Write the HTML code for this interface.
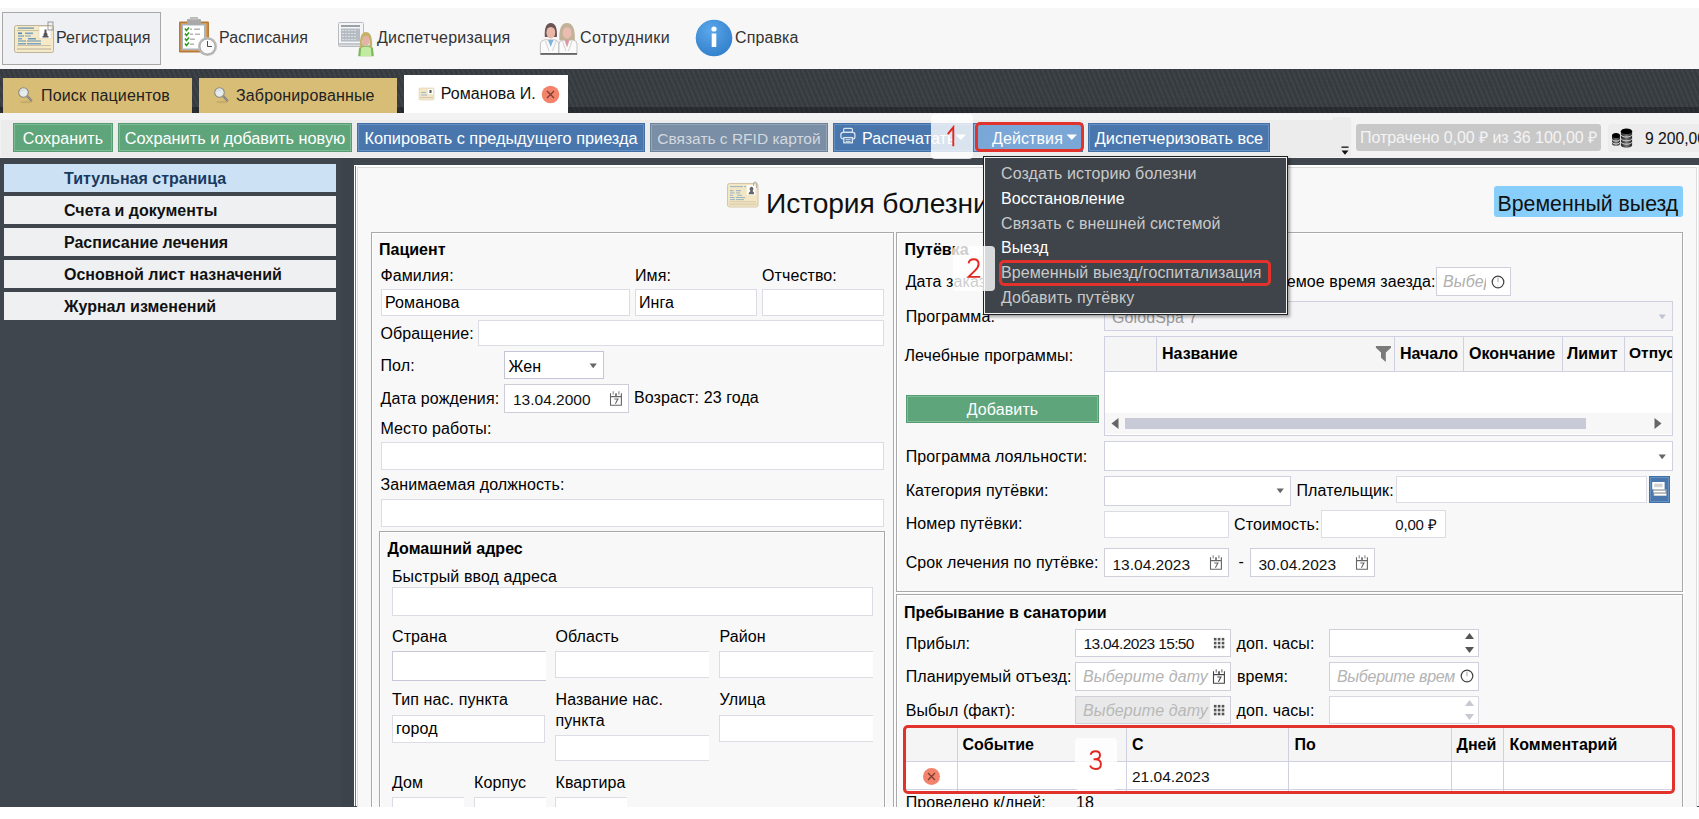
<!DOCTYPE html>
<html><head><meta charset="utf-8"><style>
html,body{margin:0;padding:0;}
body{width:1699px;height:819px;overflow:hidden;position:relative;background:#fff;font-family:"Liberation Sans", sans-serif;}
body>div,body>svg{position:absolute;box-sizing:content-box;}
.t{position:absolute;white-space:nowrap;}
</style></head><body>
<div style="left:0px;top:0px;width:1699px;height:8px;background:#fff"></div>
<div style="left:0px;top:8px;width:1699px;height:61px;background:#f7f7f7"></div>
<div style="left:2px;top:12px;width:157px;height:51px;background:#eef0f3;border:1px solid #a8a8a8"></div>
<svg style="position:absolute;left:13px;top:21px;" width="44" height="36" viewBox="0 0 44 36">
<rect x="1.5" y="4.5" width="39" height="27" rx="2" fill="#f6e9c6" stroke="#bdb39a"/>
<rect x="4" y="27" width="34" height="2" fill="#d6cbb0"/>
<rect x="4" y="24" width="34" height="1" fill="#c8bfa6"/>
<rect x="4" y="9" width="28" height="1" fill="#cabf9f"/>
<rect x="5" y="6.5" width="16" height="1.2" fill="#5b8fb0"/>
<rect x="5" y="11.5" width="4" height="1.6" fill="#4f86ad"/><rect x="12" y="11.5" width="8" height="1.6" fill="#7aa4c2"/>
<rect x="5" y="14.5" width="6" height="1" fill="#5b8fb0"/><rect x="12" y="14.5" width="6" height="1" fill="#7aa4c2"/>
<rect x="5" y="17" width="4" height="1.5" fill="#7aa4c2"/><rect x="15" y="17" width="8" height="1.5" fill="#6a9ab9"/>
<rect x="5" y="19.5" width="8" height="1" fill="#5b8fb0"/><rect x="14" y="19.5" width="14" height="1" fill="#5b8fb0"/>
<rect x="5" y="22" width="8" height="1.5" fill="#7aa4c2"/><rect x="14" y="22" width="14" height="1.5" fill="#7aa4c2"/>
<rect x="26" y="5.5" width="12" height="12" fill="#fff" stroke="#d8d0bb" stroke-width="0.5"/>
<path d="M29.5 16.5 h6 v-1.5 h-1 v-2 l-1-1.5 v-3 h-2 v3 l-1 1.5 v2 h-1z" fill="#555"/>
<rect x="35" y="1" width="5" height="8" fill="none" stroke="#999" stroke-width="1"/>
</svg>
<div class="t" style="left:56px;top:30.46px;font-size:16px;line-height:16px;font-weight:400;color:#333;letter-spacing:0.1px;">Регистрация</div>
<svg style="position:absolute;left:176px;top:16px;" width="44" height="42" viewBox="0 0 44 42">
<rect x="3" y="5.5" width="30" height="31" rx="1" fill="#b47a3c"/>
<rect x="4.5" y="7" width="27" height="28" fill="#d59a55"/>
<rect x="6" y="8" width="24" height="26" fill="#aab4be"/>
<rect x="7" y="9.5" width="21" height="23" fill="#fff"/>
<rect x="11" y="3" width="14" height="6" rx="1" fill="#a9a9a9"/>
<rect x="14" y="1" width="8" height="3" fill="#bdbdbd"/>
<g stroke="#2e9a18" stroke-width="1.6" fill="none"><path d="M9 12.5 l1.5 2 2.5-3"/><path d="M9 17.5 l1.5 2 2.5-3"/><path d="M9 22.5 l1.5 2 2.5-3"/><path d="M9 27.5 l1.5 2 2.5-3"/></g>
<g fill="#b5b5b5"><rect x="14" y="12.5" width="2" height="1.5"/><rect x="18" y="12.5" width="6" height="1.5"/><rect x="14" y="17.5" width="3" height="1.5"/><rect x="19" y="17.5" width="5" height="1.5"/><rect x="14" y="22.5" width="5" height="1.5"/><rect x="14" y="27.5" width="4" height="1.5"/></g>
<circle cx="31.5" cy="30.5" r="9.5" fill="#bbb"/>
<circle cx="31.5" cy="30.5" r="7.5" fill="#fafafa" stroke="#999" stroke-width="0.8"/>
<path d="M31.5 25 v5.5 h4.5" stroke="#222" stroke-width="0.8" fill="none"/>
</svg>
<div class="t" style="left:219px;top:30.46px;font-size:16px;line-height:16px;font-weight:400;color:#333;letter-spacing:0.1px;">Расписания</div>
<svg style="position:absolute;left:336px;top:20px;" width="42" height="40" viewBox="0 0 42 40">
<rect x="2.5" y="2.5" width="25" height="24" rx="1" fill="#f3f5f7" stroke="#b8bcc0"/>
<rect x="5" y="5" width="19" height="2" fill="#9aa0a6"/>
<rect x="5" y="8.5" width="19" height="13" fill="#b5bcc3"/>
<g fill="#fff"><rect x="6.5" y="10" width="1" height="1"/><rect x="9.5" y="10" width="1" height="1"/><rect x="12.5" y="10" width="1" height="1"/><rect x="15.5" y="10" width="1" height="1"/><rect x="18.5" y="10" width="1" height="1"/>
<rect x="6.5" y="13" width="1" height="1"/><rect x="9.5" y="13" width="1" height="1"/><rect x="12.5" y="13" width="1" height="1"/><rect x="15.5" y="13" width="1" height="1"/><rect x="18.5" y="13" width="1" height="1"/>
<rect x="6.5" y="16" width="1" height="1"/><rect x="9.5" y="16" width="1" height="1"/><rect x="12.5" y="16" width="1" height="1"/><rect x="15.5" y="16" width="1" height="1"/><rect x="18.5" y="16" width="1" height="1"/>
<rect x="6.5" y="19" width="1" height="1"/><rect x="9.5" y="19" width="1" height="1"/><rect x="12.5" y="19" width="1" height="1"/><rect x="15.5" y="19" width="1" height="1"/><rect x="18.5" y="19" width="1" height="1"/></g>
<rect x="3" y="23" width="24" height="2.5" fill="#c5c9cd"/>
<path d="M22.2 36.2 L23 28.5 Q23.5 26 26.5 25.5 H33.5 Q36.5 26 37 28.5 L37.8 36.2z" fill="#7fb55c"/>
<path d="M24.5 36 L25 28.8 Q25.5 27 27.5 26.8 H32.5 Q34.5 27 35 28.8 L35.5 36z" fill="#c2eba2"/>
<path d="M24 28 Q23 12 30 12 Q37 12 36 28 L33.5 28 L33.5 20 H26.5 V28z" fill="#c5b26c"/>
<ellipse cx="30" cy="20.5" rx="3.6" ry="5.2" fill="#e5b2a8"/>
<path d="M26 15.5 Q30 13 34 15.5 V17 Q30 15 26 17z" fill="#c5b26c"/>
</svg>
<div class="t" style="left:377px;top:30.46px;font-size:16px;line-height:16px;font-weight:400;color:#333;letter-spacing:0.22px">Диспетчеризация</div>
<svg style="position:absolute;left:538px;top:20px;" width="42" height="38" viewBox="0 0 42 38">
<path d="M2.4 34.5 V24 Q2.5 20.5 6.5 19.8 H16.8 Q20.6 20.5 20.8 24 V34.5z" fill="#fafafa" stroke="#b8b8b8" stroke-width="0.8"/>
<path d="M10 20 L12.7 27 L15.5 20z" fill="#7eb3d8"/>
<path d="M7.5 21 L11 31 M18 21 L14.5 31" stroke="#c8c8c8" stroke-width="0.8"/>
<path d="M6.8 17 Q6 3 12.8 3 Q19.6 3 18.9 17z" fill="#6b5453"/>
<ellipse cx="12.8" cy="12.5" rx="4.4" ry="6" fill="#e9b7a7"/>
<path d="M8.5 8.5 Q12.8 5.5 17 8.5 V6.5 Q12.8 3.8 8.5 6.5z" fill="#6b5453"/>
<path d="M21 34.5 V24 Q21.2 20.5 25 19.8 H35 Q38.8 20.5 39 24 V34.5z" fill="#fafafa" stroke="#b8b8b8" stroke-width="0.8"/>
<path d="M26.5 20 L29 27.5 L31.5 20z" fill="#dc95a3"/>
<path d="M24.5 21 L28 31 M34 21 L30.5 31" stroke="#c8c8c8" stroke-width="0.8"/>
<path d="M21.4 20.3 Q20.5 3 29 3 Q37.5 3 36.8 20.3z" fill="#c2b299"/>
<ellipse cx="29" cy="12.8" rx="4.4" ry="6" fill="#ebbcb0"/>
<path d="M24.5 9.5 Q29 5 33.5 9.5 V7 Q29 3.5 24.5 7z" fill="#c2b299"/>
<rect x="2.5" y="33" width="36.5" height="1.8" fill="#666"/>
</svg>
<div class="t" style="left:580px;top:30.46px;font-size:16px;line-height:16px;font-weight:400;color:#333;letter-spacing:0.33px">Сотрудники</div>
<svg style="position:absolute;left:695px;top:19px;" width="40" height="40" viewBox="0 0 40 40">
<defs><radialGradient id="ig" cx="0.4" cy="0.3" r="0.8"><stop offset="0" stop-color="#5aa7ea"/><stop offset="1" stop-color="#2f7cc9"/></radialGradient></defs>
<circle cx="19" cy="19" r="18.3" fill="url(#ig)"/>
<circle cx="19" cy="10" r="2.6" fill="#fff"/>
<rect x="16.7" y="14.5" width="4.6" height="13.5" fill="#fff"/>
</svg>
<div class="t" style="left:735px;top:30.46px;font-size:16px;line-height:16px;font-weight:400;color:#333;letter-spacing:0.1px;">Справка</div>
<div style="left:0px;top:69px;width:1699px;height:44px;background-color:#363b40;background-image:repeating-linear-gradient(67deg,rgba(255,255,255,0.045) 0 2px,rgba(0,0,0,0) 2px 4.6px)"></div>
<div style="left:0px;top:107px;width:1699px;height:6px;background-color:#262a2e;background-image:repeating-linear-gradient(67deg,rgba(255,255,255,0.03) 0 1.8px,rgba(0,0,0,0) 1.8px 4.6px)"></div>
<div style="left:3px;top:78px;width:189px;height:35px;background:#d8bd77"></div>
<svg style="position:absolute;left:17px;top:86px;" width="18" height="18" viewBox="0 0 18 18"><ellipse cx="9" cy="16" rx="6" ry="1.3" fill="#b9a263" opacity="0.6"/>
    <path d="M9.6 9.4 L14.3 14.4" stroke="#7c7c78" stroke-width="2.2" stroke-linecap="round"/>
    <path d="M9.6 9.4 L14.3 14.4" stroke="#d8dde0" stroke-width="0.8" stroke-dasharray="0.8 0.8"/>
    <circle cx="6.5" cy="6.5" r="4.8" fill="#e6ebec" stroke="#8b8b82" stroke-width="1.1"/>
    <path d="M3.3 5.8 q1-2 4.5-1.7" stroke="#c2ced6" stroke-width="0.8" fill="none"/></svg>
<div class="t" style="left:41px;top:88.16px;font-size:16px;line-height:16px;font-weight:400;color:#222;letter-spacing:0.15px">Поиск пациентов</div>
<div style="left:199px;top:78px;width:198px;height:35px;background:#d8bd77"></div>
<svg style="position:absolute;left:213px;top:86px;" width="18" height="18" viewBox="0 0 18 18"><ellipse cx="9" cy="16" rx="6" ry="1.3" fill="#b9a263" opacity="0.6"/>
    <path d="M9.6 9.4 L14.3 14.4" stroke="#7c7c78" stroke-width="2.2" stroke-linecap="round"/>
    <path d="M9.6 9.4 L14.3 14.4" stroke="#d8dde0" stroke-width="0.8" stroke-dasharray="0.8 0.8"/>
    <circle cx="6.5" cy="6.5" r="4.8" fill="#e6ebec" stroke="#8b8b82" stroke-width="1.1"/>
    <path d="M3.3 5.8 q1-2 4.5-1.7" stroke="#c2ced6" stroke-width="0.8" fill="none"/></svg>
<div class="t" style="left:236px;top:88.16px;font-size:16px;line-height:16px;font-weight:400;color:#222;letter-spacing:0.15px">Забронированные</div>
<div style="left:404px;top:75px;width:164px;height:38px;background:#fff"></div>
<svg style="position:absolute;left:418px;top:86px;" width="18" height="16" viewBox="0 0 18 16"><rect x="1" y="2" width="15" height="12" rx="1" fill="#f3e7c8" stroke="#ddd2b5" stroke-width="0.6"/>
<rect x="10" y="3" width="5" height="5" fill="#fff"/><rect x="11.5" y="4" width="2" height="3" fill="#555"/>
<g fill="#9db6c8"><rect x="3" y="6" width="5" height="1"/><rect x="3" y="8.5" width="6" height="1"/></g><rect x="2" y="11" width="13" height="1" fill="#d0c7ae"/></svg>
<div class="t" style="left:440.7px;top:86.26px;font-size:16px;line-height:16px;font-weight:400;color:#111;letter-spacing:0.1px;">Романова И.</div>
<svg style="position:absolute;left:541px;top:85px;" width="19" height="19" viewBox="0 0 19 19"><circle cx="9.5" cy="9.5" r="8.8" fill="#f4836c"/><path d="M6 6 L13 13 M13 6 L6 13" stroke="#7a3c30" stroke-width="1.2"/></svg>
<div style="left:0px;top:113px;width:1699px;height:45px;background:#f3f3f3"></div>
<div style="left:1px;top:120px;width:1350px;height:37px;background:#ececec"></div>
<div style="left:1333px;top:117px;width:18px;height:40px;background:#ececec;border-radius:0 4px 0 0"></div>
<div style="left:13px;top:123px;width:100px;height:29px;background:#5fa57b;box-shadow:inset 0 0 0 1px #579c72,inset 0 0 0 2px #7fbb95;"></div>
<div class="t" style="left:13px;top:130.96px;font-size:16px;line-height:16px;font-weight:400;color:#fff;letter-spacing:0.1px;width:100px;text-align:center">Сохранить</div>
<div style="left:118px;top:123px;width:234px;height:29px;background:#5fa57b;box-shadow:inset 0 0 0 1px #579c72,inset 0 0 0 2px #7fbb95;"></div>
<div class="t" style="left:118px;top:130.00px;font-size:16.3px;line-height:16.3px;font-weight:400;color:#fff;width:234px;text-align:center">Сохранить и добавить новую</div>
<div style="left:357px;top:123px;width:288px;height:29px;background:#4977ad;box-shadow:inset 0 0 0 1px #4170a8,inset 0 0 0 2px #6690c0;"></div>
<div class="t" style="left:357px;top:130.00px;font-size:16.3px;line-height:16.3px;font-weight:400;color:#fff;width:288px;text-align:center">Копировать с предыдущего приезда</div>
<div style="left:650px;top:123px;width:178px;height:29px;background:#7a8ea5;box-shadow:inset 0 0 0 1px #6c819a,inset 0 0 0 2px #95a6b8;"></div>
<div class="t" style="left:650px;top:131.38px;font-size:15.5px;line-height:15.5px;font-weight:400;color:#d3d9df;width:178px;text-align:center">Связать с RFID картой</div>
<div style="left:833px;top:123px;width:140px;height:29px;background:#4977ad;box-shadow:inset 0 0 0 1px #4170a8,inset 0 0 0 2px #6690c0;"></div>
<svg style="position:absolute;left:839px;top:126px;" width="18" height="19" viewBox="0 0 18 19"><g stroke="#dbe4ee" fill="none"><rect x="4.6" y="2.4" width="8.8" height="4" rx="1.2" stroke-width="1.2"/>
<rect x="1.9" y="6.3" width="14" height="6.6" rx="2.2" stroke-width="1.3"/>
<rect x="4.8" y="11.6" width="8.6" height="5.2" fill="#4977ad" stroke-width="1.3"/>
<path d="M6.6 13.6 H11.6 M6.6 15.4 H11.6" stroke-width="0.9"/></g></svg>
<div class="t" style="left:862px;top:130.96px;font-size:16px;line-height:16px;font-weight:400;color:#fff;letter-spacing:0.1px;">Распечатать</div>
<svg style="position:absolute;left:955px;top:134px;" width="12" height="7" viewBox="0 0 12 7"><path d="M0.5 0.5 L11 0.5 L5.75 6z" fill="#fff"/></svg>
<div style="left:973px;top:123px;width:110px;height:29px;background:#7ba7d7;box-shadow:inset 0 0 0 1px #4977ad,inset 0 0 0 2px #8db3dd;"></div>
<div class="t" style="left:992px;top:130.96px;font-size:16px;line-height:16px;font-weight:400;color:#fff;letter-spacing:0.1px;">Действия</div>
<svg style="position:absolute;left:1066px;top:134px;" width="12" height="7" viewBox="0 0 12 7"><path d="M0.5 0.5 L11 0.5 L5.75 6z" fill="#fff"/></svg>
<div style="left:975px;top:122px;width:103px;height:24px;border:3px solid #e1332c;border-radius:5px"></div>
<div style="left:1088px;top:123px;width:182px;height:29px;background:#4977ad;box-shadow:inset 0 0 0 1px #4170a8,inset 0 0 0 2px #6690c0;"></div>
<div class="t" style="left:1088px;top:130.00px;font-size:16.3px;line-height:16.3px;font-weight:400;color:#fff;width:182px;text-align:center">Диспетчеризовать все</div>
<svg style="position:absolute;left:1340px;top:145px;" width="10" height="11" viewBox="0 0 10 11"><rect x="1.5" y="1.5" width="7" height="1.3" fill="#111"/><path d="M1.5 5.5 L8.5 5.5 L5 9.8z" fill="#111"/></svg>
<div style="left:1356px;top:124px;width:245px;height:27px;background:#c8c8c8;border-radius:3px"></div>
<div class="t" style="left:1360px;top:130.06px;font-size:16px;line-height:16px;font-weight:400;color:#f4f4f4;letter-spacing:-0.05px">Потрачено 0,00 ₽ из 36 100,00 ₽</div>
<div style="left:1608px;top:124px;width:91px;height:28px;background:#ececec;border-radius:4px 0 0 4px"></div>
<svg style="position:absolute;left:1610px;top:126px;" width="24" height="22" viewBox="0 0 24 22"><defs><linearGradient id="cg" x1="0" x2="1"><stop offset="0" stop-color="#222"/><stop offset="0.5" stop-color="#777"/><stop offset="1" stop-color="#222"/></linearGradient></defs>
<path d="M2 9.5 V17.5 A4 2.3 0 0 0 10 17.5 V9.5z" fill="url(#cg)"/>
<path d="M2 13.2 A4 2 0 0 0 10 13.2 M2 16 A4 2 0 0 0 10 16" stroke="#f2f2f2" stroke-width="0.8" fill="none"/>
<ellipse cx="6" cy="9.6" rx="4" ry="2.6" fill="#000"/>
<path d="M10.9 5 V19.2 A5.6 2.6 0 0 0 22.1 19.2 V5z" fill="url(#cg)"/>
<path d="M10.9 8.6 A5.6 2.4 0 0 0 22.1 8.6 M10.9 12.4 A5.6 2.4 0 0 0 22.1 12.4 M10.9 15.8 A5.6 2.4 0 0 0 22.1 15.8" stroke="#f2f2f2" stroke-width="0.8" fill="none"/>
<ellipse cx="16.5" cy="5.3" rx="5.6" ry="2.9" fill="#000"/></svg>
<div class="t" style="left:1645px;top:130.51px;font-size:15.7px;line-height:15.7px;font-weight:400;color:#111;">9 200,00 ₽</div>
<div style="left:0px;top:158px;width:1699px;height:649px;background:#40464d"></div>
<div style="left:342px;top:158px;width:12px;height:649px;background:#3d434a"></div>
<div style="left:4px;top:164px;width:332px;height:28px;background:#cde1f4"></div>
<div class="t" style="left:64px;top:170.86px;font-size:16px;line-height:16px;font-weight:700;color:#183a5e;">Титульная страница</div>
<div style="left:4px;top:196px;width:332px;height:28px;background:#eff0f2"></div>
<div class="t" style="left:64px;top:202.86px;font-size:16px;line-height:16px;font-weight:700;color:#111;">Счета и документы</div>
<div style="left:4px;top:228px;width:332px;height:28px;background:#eff0f2"></div>
<div class="t" style="left:64px;top:234.86px;font-size:16px;line-height:16px;font-weight:700;color:#111;">Расписание лечения</div>
<div style="left:4px;top:260px;width:332px;height:28px;background:#eff0f2"></div>
<div class="t" style="left:64px;top:266.86px;font-size:16px;line-height:16px;font-weight:700;color:#111;">Основной лист назначений</div>
<div style="left:4px;top:292px;width:332px;height:28px;background:#eff0f2"></div>
<div class="t" style="left:64px;top:298.86px;font-size:16px;line-height:16px;font-weight:700;color:#111;">Журнал изменений</div>
<div style="left:354px;top:165px;width:1345px;height:641px;background:#fff"></div>
<div style="left:355px;top:166px;width:1px;height:640px;background:#6e7478"></div>
<div style="left:357px;top:167px;width:1338px;height:639px;background:#f8f8f8;border-left:1px solid #dcdcdc;border-top:1px solid #dcdcdc;border-right:1px solid #dcdcdc"></div>
<div style="left:1698px;top:165px;width:1px;height:641px;background:#eeeeee"></div>
<div style="left:0px;top:807px;width:1699px;height:12px;background:#fff"></div>
<svg style="position:absolute;left:726px;top:181px;" width="34" height="28" viewBox="0 0 34 28"><rect x="1.5" y="2.5" width="30.5" height="23.5" rx="2" fill="#f3e6c4" stroke="#c9bd9c" stroke-width="0.8"/>
<rect x="2.5" y="21" width="28.5" height="4.5" fill="#ece0bd"/>
<rect x="20.8" y="4.3" width="8.6" height="9.9" fill="#fff"/>
<path d="M22.5 13.2 h5.5 v-1.6 l-1.2-1 v-1.2 q0.8-0.8 0.6-2 q-0.3-1.6-1.9-1.6 q-1.6 0-1.9 1.6 q-0.2 1.2 0.6 2 v1.2 l-1.2 1z" fill="#666"/>
<path d="M27.5 5 v-2.6 q0-1.4 1.6-1.4 q1.6 0 1.6 1.4 v4.6" stroke="#9a9a9a" stroke-width="0.8" fill="none"/>
<g fill="#8fb0c4"><rect x="4" y="5.2" width="13" height="0.9"/><rect x="18" y="5.2" width="2" height="0.9"/>
<rect x="4" y="9.2" width="3.5" height="1"/><rect x="10" y="9.2" width="5" height="1"/>
<rect x="4" y="11.5" width="4.5" height="0.9"/><rect x="10" y="11.5" width="4" height="0.9"/>
<rect x="4" y="13.8" width="3" height="0.9"/><rect x="11" y="13.8" width="5" height="0.9"/>
<rect x="4" y="16" width="4.5" height="0.9"/><rect x="10" y="16" width="9" height="0.9"/>
<rect x="4" y="18.2" width="5" height="0.9"/><rect x="10" y="18.2" width="8" height="0.9"/></g>
<rect x="3.5" y="20.3" width="26.5" height="0.8" fill="#d5c9a9"/><rect x="3.5" y="22.8" width="26.5" height="0.8" fill="#d5c9a9"/></svg>
<div class="t" style="left:766px;top:188.93px;font-size:28.2px;line-height:28.2px;font-weight:400;color:#111;letter-spacing:-0.1px">История болезни</div>
<div style="left:1494px;top:186px;width:189px;height:31px;background:#87cefa;border-radius:3px"></div>
<div class="t" style="left:1497.5px;top:194.27px;font-size:21.3px;line-height:21.3px;font-weight:400;color:#111;">Временный выезд</div>
<div style="left:371px;top:232px;width:521px;height:600px;border:1px solid #a9a9a9;box-shadow:inset 1px 1px 0 #fff, 1px 1px 0 #fff"></div>
<div class="t" style="left:379px;top:241.76px;font-size:16px;line-height:16px;font-weight:700;color:#000;">Пациент</div>
<div class="t" style="left:380.5px;top:268.36px;font-size:16px;line-height:16px;font-weight:400;color:#000;letter-spacing:0.1px;">Фамилия:</div>
<div class="t" style="left:635px;top:268.36px;font-size:16px;line-height:16px;font-weight:400;color:#000;letter-spacing:0.1px;">Имя:</div>
<div class="t" style="left:762px;top:268.36px;font-size:16px;line-height:16px;font-weight:400;color:#000;letter-spacing:0.1px;">Отчество:</div>
<div style="left:381px;top:289px;width:247px;height:25px;background:#fff;border:1px solid #dcdce4"></div>
<div style="left:635px;top:289px;width:120px;height:25px;background:#fff;border:1px solid #dcdce4"></div>
<div style="left:762px;top:289px;width:120px;height:25px;background:#fff;border:1px solid #dcdce4"></div>
<div class="t" style="left:385px;top:295.26px;font-size:16px;line-height:16px;font-weight:400;color:#000;letter-spacing:0.1px;">Романова</div>
<div class="t" style="left:639px;top:295.26px;font-size:16px;line-height:16px;font-weight:400;color:#000;letter-spacing:0.1px;">Инга</div>
<div class="t" style="left:380.5px;top:325.96px;font-size:16px;line-height:16px;font-weight:400;color:#000;letter-spacing:0.1px;">Обращение:</div>
<div style="left:478px;top:320px;width:404px;height:24px;background:#fff;border:1px solid #dcdce4"></div>
<div class="t" style="left:380.5px;top:357.56px;font-size:16px;line-height:16px;font-weight:400;color:#000;letter-spacing:0.1px;">Пол:</div>
<div style="left:504px;top:351px;width:98px;height:26px;background:#fff;border:1px solid #c4c5d6"></div>
<div class="t" style="left:508.5px;top:359.16px;font-size:16px;line-height:16px;font-weight:400;color:#000;letter-spacing:0.1px;">Жен</div>
<svg style="position:absolute;left:589px;top:362.5px;" width="9" height="6" viewBox="0 0 9 6"><path d="M0.6 0.6 L7.8 0.6 L4.2 5.2z" fill="#666"/></svg>
<div class="t" style="left:380.5px;top:390.76px;font-size:16px;line-height:16px;font-weight:400;color:#000;letter-spacing:0.1px;">Дата рождения:</div>
<div style="left:504px;top:384px;width:123px;height:27px;background:#fff;border:1px solid #ceced8"></div>
<div class="t" style="left:513px;top:392.38px;font-size:15.5px;line-height:15.5px;font-weight:400;color:#111;">13.04.2000</div>
<svg style="position:absolute;left:609px;top:390px;" width="14" height="17" viewBox="0 0 14 17"><path d="M1.5 3.2 V15.3 H12.4 V3.2 M1.5 6.6 H12.4" stroke="#666" stroke-width="1.1" fill="none"/>
    <path d="M7 3.3 V6.5" stroke="#666" stroke-width="1.6"/>
    <path d="M4.2 1.2 V4.4 M9.9 1.2 V4.4" stroke="#666" stroke-width="1.1" opacity="0.75"/>
    <path d="M5.3 9 H8.9 L6.4 13.8" stroke="#666" stroke-width="1.1" fill="none"/></svg>
<div class="t" style="left:634px;top:390.36px;font-size:16px;line-height:16px;font-weight:400;color:#000;letter-spacing:0.1px;">Возраст: 23 года</div>
<div class="t" style="left:380.5px;top:420.76px;font-size:16px;line-height:16px;font-weight:400;color:#000;letter-spacing:0.1px;">Место работы:</div>
<div style="left:381px;top:442px;width:501px;height:26px;background:#fff;border:1px solid #dcdce4"></div>
<div class="t" style="left:380.5px;top:477.46px;font-size:16px;line-height:16px;font-weight:400;color:#000;letter-spacing:0.1px;">Занимаемая должность:</div>
<div style="left:381px;top:499px;width:501px;height:26px;background:#fff;border:1px solid #dcdce4"></div>
<div style="left:379px;top:531px;width:504px;height:300px;border:1px solid #a9a9a9;box-shadow:inset 1px 1px 0 #fff, 1px 1px 0 #fff"></div>
<div class="t" style="left:387.5px;top:541.06px;font-size:16px;line-height:16px;font-weight:700;color:#000;">Домашний адрес</div>
<div class="t" style="left:392px;top:569.46px;font-size:16px;line-height:16px;font-weight:400;color:#000;letter-spacing:0.1px;">Быстрый ввод адреса</div>
<div style="left:392px;top:587px;width:479px;height:27px;background:#fff;border:1px solid #dcdce4"></div>
<div class="t" style="left:392px;top:628.96px;font-size:16px;line-height:16px;font-weight:400;color:#000;letter-spacing:0.1px;">Страна</div>
<div class="t" style="left:555.5px;top:628.96px;font-size:16px;line-height:16px;font-weight:400;color:#000;letter-spacing:0.1px;">Область</div>
<div class="t" style="left:719.5px;top:628.96px;font-size:16px;line-height:16px;font-weight:400;color:#000;letter-spacing:0.1px;">Район</div>
<div style="left:392px;top:651px;width:153px;height:28px;background:#fff;border:1px solid #c8c8d8;border-right:none"></div>
<div style="left:555px;top:651px;width:153px;height:25px;background:#fff;border:1px solid #dcdce4;border-right:none"></div>
<div style="left:719px;top:651px;width:153px;height:25px;background:#fff;border:1px solid #dcdce4;border-right:none"></div>
<div class="t" style="left:392px;top:692.46px;font-size:16px;line-height:16px;font-weight:400;color:#000;letter-spacing:0.1px;">Тип нас. пункта</div>
<div class="t" style="left:555.5px;top:692.46px;font-size:16px;line-height:16px;font-weight:400;color:#000;letter-spacing:0.1px;">Название нас.</div>
<div class="t" style="left:555.5px;top:712.56px;font-size:16px;line-height:16px;font-weight:400;color:#000;letter-spacing:0.1px;">пункта</div>
<div class="t" style="left:719.5px;top:692.46px;font-size:16px;line-height:16px;font-weight:400;color:#000;letter-spacing:0.1px;">Улица</div>
<div style="left:392px;top:715px;width:151px;height:26px;background:#fff;border:1px solid #dcdce4"></div>
<div class="t" style="left:396px;top:720.96px;font-size:16px;line-height:16px;font-weight:400;color:#000;letter-spacing:0.1px;">город</div>
<div style="left:555px;top:735px;width:153px;height:24px;background:#fff;border:1px solid #dcdce4;border-right:none"></div>
<div style="left:719px;top:715px;width:153px;height:25px;background:#fff;border:1px solid #dcdce4;border-right:none"></div>
<div class="t" style="left:392px;top:774.96px;font-size:16px;line-height:16px;font-weight:400;color:#000;letter-spacing:0.1px;">Дом</div>
<div class="t" style="left:474px;top:774.96px;font-size:16px;line-height:16px;font-weight:400;color:#000;letter-spacing:0.1px;">Корпус</div>
<div class="t" style="left:555.5px;top:774.96px;font-size:16px;line-height:16px;font-weight:400;color:#000;letter-spacing:0.1px;">Квартира</div>
<div style="left:392px;top:797px;width:71px;height:26px;background:#fff;border:1px solid #dcdce4;border-right:none"></div>
<div style="left:474px;top:797px;width:71px;height:26px;background:#fff;border:1px solid #dcdce4;border-right:none"></div>
<div style="left:555px;top:797px;width:71px;height:26px;background:#fff;border:1px solid #dcdce4;border-right:none"></div>
<div style="left:896px;top:232px;width:785px;height:358px;border:1px solid #a9a9a9;box-shadow:inset 1px 1px 0 #fff, 1px 1px 0 #fff"></div>
<div class="t" style="left:904.5px;top:241.76px;font-size:16px;line-height:16px;font-weight:700;color:#000;">Путёвка</div>
<div class="t" style="left:905.7px;top:273.76px;font-size:16px;line-height:16px;font-weight:400;color:#000;letter-spacing:0.1px;">Дата заказа:</div>
<div class="t" style="left:1035.5px;top:273.76px;font-size:16px;line-height:16px;font-weight:400;color:#000;letter-spacing:0.1px;width:400px;text-align:right">Планируемое время заезда:</div>
<div style="left:1436px;top:267px;width:73px;height:27px;background:#fff;border:1px solid #d0d0dc"></div>
<div class="t" style="left:1443px;top:274.46px;font-size:16px;line-height:16px;font-weight:400;color:#b0b0b0;letter-spacing:0.1px;font-style:italic;width:43px;overflow:hidden">Выбер</div>
<svg style="position:absolute;left:1489.8px;top:273.6px;" width="16" height="16" viewBox="0 0 16 16"><circle cx="8" cy="8" r="5.8" fill="none" stroke="#444" stroke-width="1.25"/><path d="M8 3.6 v4.6" stroke="#999" stroke-width="0.9"/><path d="M8 11.5 v1" stroke="#bbb" stroke-width="0.8"/></svg>
<div class="t" style="left:905.7px;top:308.86px;font-size:16px;line-height:16px;font-weight:400;color:#000;letter-spacing:0.1px;">Программа:</div>
<div style="left:1104px;top:301px;width:567px;height:28px;background:#f4f4f6;border:1px solid #cfd0e0"></div>
<div class="t" style="left:1112px;top:310.46px;font-size:16px;line-height:16px;font-weight:400;color:#999;letter-spacing:0.1px;">GolodSpa 7</div>
<svg style="position:absolute;left:1658px;top:313.5px;" width="9" height="6" viewBox="0 0 9 6"><path d="M0.6 0.6 L7.8 0.6 L4.2 5.2z" fill="#c0c4d4"/></svg>
<div class="t" style="left:904.5px;top:348.16px;font-size:16px;line-height:16px;font-weight:400;color:#000;letter-spacing:0.1px;">Лечебные программы:</div>
<div style="left:1104px;top:336px;width:567px;height:98px;background:#fff;border:1px solid #cfd0e0"></div>
<div style="left:1105px;top:337px;width:567px;height:34px;background:#f5f5f5;border-bottom:1px solid #cfd0e0"></div>
<div style="left:1156px;top:337px;width:1px;height:34px;background:#cfd0e0"></div>
<div style="left:1394px;top:337px;width:1px;height:34px;background:#cfd0e0"></div>
<div style="left:1463px;top:337px;width:1px;height:34px;background:#cfd0e0"></div>
<div style="left:1562px;top:337px;width:1px;height:34px;background:#cfd0e0"></div>
<div style="left:1624px;top:337px;width:1px;height:34px;background:#cfd0e0"></div>
<div class="t" style="left:1162px;top:346.36px;font-size:16px;line-height:16px;font-weight:700;color:#000;">Название</div>
<svg style="position:absolute;left:1375px;top:345px;" width="18" height="18" viewBox="0 0 18 18"><path d="M0.9 1 H16 V2.7 L10.8 7.5 V17 L6 12.7 V7.5 L0.9 2.7z" fill="#7a7a7a"/></svg>
<div class="t" style="left:1400px;top:346.36px;font-size:16px;line-height:16px;font-weight:700;color:#000;">Начало</div>
<div class="t" style="left:1469px;top:346.36px;font-size:16px;line-height:16px;font-weight:700;color:#000;">Окончание</div>
<div class="t" style="left:1567px;top:346.36px;font-size:16px;line-height:16px;font-weight:700;color:#000;">Лимит</div>
<div style="left:1629px;top:337px;width:43px;height:34px;overflow:hidden"><div class="t" style="left:0;top:8.2px;font-size:15.5px;line-height:15.5px;font-weight:700">Отпуск</div></div>
<div style="left:1105px;top:413px;width:567px;height:21px;background:#f7f7f7"></div>
<div style="left:1125px;top:418px;width:461px;height:11px;background:#c8cad8"></div>
<svg style="position:absolute;left:1110px;top:417px;" width="10" height="13" viewBox="0 0 10 13"><path d="M8.5 1 L1.5 6.5 L8.5 12z" fill="#666"/></svg>
<svg style="position:absolute;left:1653px;top:417px;" width="10" height="13" viewBox="0 0 10 13"><path d="M1.5 1 L8.5 6.5 L1.5 12z" fill="#666"/></svg>
<div style="left:906px;top:395px;width:193px;height:28px;background:#5fa57b;box-shadow:inset 0 0 0 1px #579c72,inset 0 0 0 2px #7fbb95;"></div>
<div class="t" style="left:906px;top:402.16px;font-size:16px;line-height:16px;font-weight:400;color:#fff;letter-spacing:0.1px;width:193px;text-align:center">Добавить</div>
<div class="t" style="left:905.7px;top:448.86px;font-size:16px;line-height:16px;font-weight:400;color:#000;letter-spacing:0.1px;">Программа лояльности:</div>
<div style="left:1104px;top:441px;width:567px;height:28px;background:#fff;border:1px solid #cfd0e0"></div>
<svg style="position:absolute;left:1658px;top:453.5px;" width="9" height="6" viewBox="0 0 9 6"><path d="M0.6 0.6 L7.8 0.6 L4.2 5.2z" fill="#666"/></svg>
<div class="t" style="left:905.7px;top:483.06px;font-size:16px;line-height:16px;font-weight:400;color:#000;letter-spacing:0.1px;">Категория путёвки:</div>
<div style="left:1104px;top:476px;width:185px;height:28px;background:#fff;border:1px solid #cfd0e0"></div>
<svg style="position:absolute;left:1276px;top:487.5px;" width="9" height="6" viewBox="0 0 9 6"><path d="M0.6 0.6 L7.8 0.6 L4.2 5.2z" fill="#666"/></svg>
<div class="t" style="left:1296.5px;top:483.06px;font-size:16px;line-height:16px;font-weight:400;color:#000;letter-spacing:0.1px;">Плательщик:</div>
<div style="left:1396px;top:476px;width:249px;height:25px;background:#fff;border:1px solid #dcdce4"></div>
<div style="left:1649px;top:476px;width:21px;height:27px;background:#4977ad;box-shadow:inset 0 0 0 1px #3f6fa6,inset 0 0 0 2px #6690c0"></div>
<svg style="position:absolute;left:1650px;top:480px;" width="18" height="18" viewBox="0 0 18 18"><rect x="3.5" y="9.3" width="13" height="6.6" fill="#a9a9a9"/>
<rect x="2.2" y="2" width="12.4" height="7.4" fill="#fff"/><rect x="4.2" y="3.6" width="8.4" height="3.6" fill="#d2d2d2"/>
<rect x="3.3" y="10.8" width="12" height="1.5" fill="#fff"/><rect x="4.3" y="13.8" width="12" height="1.7" fill="#fff"/></svg>
<div class="t" style="left:905.7px;top:515.96px;font-size:16px;line-height:16px;font-weight:400;color:#000;letter-spacing:0.1px;">Номер путёвки:</div>
<div style="left:1104px;top:511px;width:123px;height:25px;background:#fff;border:1px solid #dcdce4"></div>
<div class="t" style="left:1234px;top:517.46px;font-size:16px;line-height:16px;font-weight:400;color:#000;letter-spacing:0.1px;">Стоимость:</div>
<div style="left:1321px;top:510px;width:123px;height:26px;background:#fff;border:1px solid #dcdce4"></div>
<div class="t" style="left:1338px;top:517.30px;font-size:15px;line-height:15px;font-weight:400;color:#111;width:98.5px;text-align:right;letter-spacing:-0.2px">0,00 ₽</div>
<div class="t" style="left:905.7px;top:555.46px;font-size:16px;line-height:16px;font-weight:400;color:#000;letter-spacing:0.1px;">Срок лечения по путёвке:</div>
<div style="left:1104px;top:548px;width:123px;height:27px;background:#fff;border:1px solid #d0d0dc"></div>
<div class="t" style="left:1112.5px;top:557.38px;font-size:15.5px;line-height:15.5px;font-weight:400;color:#111;">13.04.2023</div>
<svg style="position:absolute;left:1209px;top:554px;" width="14" height="17" viewBox="0 0 14 17"><path d="M1.5 3.2 V15.3 H12.4 V3.2 M1.5 6.6 H12.4" stroke="#666" stroke-width="1.1" fill="none"/>
    <path d="M7 3.3 V6.5" stroke="#666" stroke-width="1.6"/>
    <path d="M4.2 1.2 V4.4 M9.9 1.2 V4.4" stroke="#666" stroke-width="1.1" opacity="0.75"/>
    <path d="M5.3 9 H8.9 L6.4 13.8" stroke="#666" stroke-width="1.1" fill="none"/></svg>
<div class="t" style="left:1238.5px;top:554.46px;font-size:16px;line-height:16px;font-weight:400;color:#000;letter-spacing:0.1px;">-</div>
<div style="left:1250px;top:548px;width:123px;height:27px;background:#fff;border:1px solid #d0d0dc"></div>
<div class="t" style="left:1258.5px;top:557.38px;font-size:15.5px;line-height:15.5px;font-weight:400;color:#111;">30.04.2023</div>
<svg style="position:absolute;left:1355px;top:554px;" width="14" height="17" viewBox="0 0 14 17"><path d="M1.5 3.2 V15.3 H12.4 V3.2 M1.5 6.6 H12.4" stroke="#666" stroke-width="1.1" fill="none"/>
    <path d="M7 3.3 V6.5" stroke="#666" stroke-width="1.6"/>
    <path d="M4.2 1.2 V4.4 M9.9 1.2 V4.4" stroke="#666" stroke-width="1.1" opacity="0.75"/>
    <path d="M5.3 9 H8.9 L6.4 13.8" stroke="#666" stroke-width="1.1" fill="none"/></svg>
<div style="left:896px;top:594px;width:785px;height:300px;border:1px solid #a9a9a9;box-shadow:inset 1px 1px 0 #fff, 1px 1px 0 #fff"></div>
<div class="t" style="left:904px;top:604.56px;font-size:16px;line-height:16px;font-weight:700;color:#000;">Пребывание в санатории</div>
<div class="t" style="left:905.7px;top:636.16px;font-size:16px;line-height:16px;font-weight:400;color:#000;letter-spacing:0.1px;">Прибыл:</div>
<div style="left:1075px;top:629px;width:154px;height:26px;background:#fff;border:1px solid #d0d0dc"></div>
<div class="t" style="left:1083.5px;top:636.48px;font-size:15.5px;line-height:15.5px;font-weight:400;color:#111;letter-spacing:-0.65px">13.04.2023 15:50</div>
<svg style="position:absolute;left:1213px;top:637px;" width="12" height="12" viewBox="0 0 12 12"><rect x="0.90" y="0.90" width="2.6" height="2.6" fill="#555"/><rect x="0.90" y="4.80" width="2.6" height="2.6" fill="#555"/><rect x="0.90" y="8.70" width="2.6" height="2.6" fill="#555"/><rect x="4.80" y="0.90" width="2.6" height="2.6" fill="#555"/><rect x="4.80" y="4.80" width="2.6" height="2.6" fill="#555"/><rect x="4.80" y="8.70" width="2.6" height="2.6" fill="#555"/><rect x="8.70" y="0.90" width="2.6" height="2.6" fill="#555"/><rect x="8.70" y="4.80" width="2.6" height="2.6" fill="#555"/><rect x="8.70" y="8.70" width="2.6" height="2.6" fill="#555"/></svg>
<div class="t" style="left:1236.5px;top:636.16px;font-size:16px;line-height:16px;font-weight:400;color:#000;letter-spacing:0.1px;">доп. часы:</div>
<div style="left:1329px;top:629px;width:148px;height:26px;background:#fff;border:1px solid #d0d0dc"></div>
<svg style="position:absolute;left:1464px;top:632px;" width="11" height="22" viewBox="0 0 11 22"><path d="M1 7 L10 7 L5.5 1z" fill="#555"/><path d="M1 15 L10 15 L5.5 21z" fill="#555"/></svg>
<div class="t" style="left:905.7px;top:668.86px;font-size:16px;line-height:16px;font-weight:400;color:#000;letter-spacing:0.1px;">Планируемый отъезд:</div>
<div style="left:1075px;top:662px;width:154px;height:27px;background:#fff;border:1px solid #d0d0dc"></div>
<div class="t" style="left:1083px;top:669.46px;font-size:16px;line-height:16px;font-weight:400;color:#b4b4b4;letter-spacing:0.1px;font-style:italic">Выберите дату</div>
<svg style="position:absolute;left:1211.5px;top:668px;" width="14" height="17" viewBox="0 0 14 17"><path d="M1.5 3.2 V15.3 H12.4 V3.2 M1.5 6.6 H12.4" stroke="#444" stroke-width="1.1" fill="none"/>
    <path d="M7 3.3 V6.5" stroke="#444" stroke-width="1.6"/>
    <path d="M4.2 1.2 V4.4 M9.9 1.2 V4.4" stroke="#444" stroke-width="1.1" opacity="0.75"/>
    <path d="M5.3 9 H8.9 L6.4 13.8" stroke="#444" stroke-width="1.1" fill="none"/></svg>
<div class="t" style="left:1237px;top:668.86px;font-size:16px;line-height:16px;font-weight:400;color:#000;letter-spacing:0.1px;">время:</div>
<div style="left:1329px;top:662px;width:148px;height:27px;background:#fff;border:1px solid #d0d0dc"></div>
<div class="t" style="left:1337px;top:669.46px;font-size:16px;line-height:16px;font-weight:400;color:#b4b4b4;font-style:italic;letter-spacing:-0.3px">Выберите врем</div>
<svg style="position:absolute;left:1458.6px;top:668.4px;" width="16" height="16" viewBox="0 0 16 16"><circle cx="8" cy="8" r="5.8" fill="none" stroke="#444" stroke-width="1.25"/><path d="M8 3.6 v4.6" stroke="#999" stroke-width="0.9"/><path d="M8 11.5 v1" stroke="#bbb" stroke-width="0.8"/></svg>
<div class="t" style="left:905.7px;top:703.26px;font-size:16px;line-height:16px;font-weight:400;color:#000;letter-spacing:0.1px;">Выбыл (факт):</div>
<div style="left:1075px;top:696px;width:154px;height:26px;background:#e9e9e9;border:1px solid #d0d0dc"></div>
<div style="left:1210px;top:697px;width:20px;height:26px;background:#f7f7f7"></div>
<div class="t" style="left:1083px;top:703.46px;font-size:16px;line-height:16px;font-weight:400;color:#b8b8b8;letter-spacing:0.1px;font-style:italic">Выберите дату</div>
<svg style="position:absolute;left:1213px;top:704px;" width="12" height="12" viewBox="0 0 12 12"><rect x="0.90" y="0.90" width="2.6" height="2.6" fill="#555"/><rect x="0.90" y="4.80" width="2.6" height="2.6" fill="#555"/><rect x="0.90" y="8.70" width="2.6" height="2.6" fill="#555"/><rect x="4.80" y="0.90" width="2.6" height="2.6" fill="#555"/><rect x="4.80" y="4.80" width="2.6" height="2.6" fill="#555"/><rect x="4.80" y="8.70" width="2.6" height="2.6" fill="#555"/><rect x="8.70" y="0.90" width="2.6" height="2.6" fill="#555"/><rect x="8.70" y="4.80" width="2.6" height="2.6" fill="#555"/><rect x="8.70" y="8.70" width="2.6" height="2.6" fill="#555"/></svg>
<div class="t" style="left:1236.5px;top:703.26px;font-size:16px;line-height:16px;font-weight:400;color:#000;letter-spacing:0.1px;">доп. часы:</div>
<div style="left:1329px;top:696px;width:148px;height:26px;background:#fff;border:1px solid #d8d8e0"></div>
<svg style="position:absolute;left:1464px;top:699px;" width="11" height="22" viewBox="0 0 11 22"><path d="M1 7 L10 7 L5.5 1z" fill="#c8c8d0"/><path d="M1 15 L10 15 L5.5 21z" fill="#c8c8d0"/></svg>
<div style="left:905px;top:727px;width:768px;height:64px;background:#fff"></div>
<div style="left:905px;top:727px;width:768px;height:34px;background:#f5f5f5;border-bottom:1px solid #cfd0e0"></div>
<div style="left:957px;top:727px;width:1px;height:64px;background:#cfd0e0"></div>
<div style="left:1126px;top:727px;width:1px;height:64px;background:#cfd0e0"></div>
<div style="left:1288px;top:727px;width:1px;height:64px;background:#cfd0e0"></div>
<div style="left:1451px;top:727px;width:1px;height:64px;background:#cfd0e0"></div>
<div style="left:1503px;top:727px;width:1px;height:64px;background:#cfd0e0"></div>
<div class="t" style="left:962.5px;top:736.86px;font-size:16px;line-height:16px;font-weight:700;color:#000;">Событие</div>
<div class="t" style="left:1132px;top:736.86px;font-size:16px;line-height:16px;font-weight:700;color:#000;">С</div>
<div class="t" style="left:1294.5px;top:736.86px;font-size:16px;line-height:16px;font-weight:700;color:#000;">По</div>
<div class="t" style="left:1456.5px;top:736.86px;font-size:16px;line-height:16px;font-weight:700;color:#000;">Дней</div>
<div class="t" style="left:1509.5px;top:736.86px;font-size:16px;line-height:16px;font-weight:700;color:#000;">Комментарий</div>
<svg style="position:absolute;left:922px;top:767px;" width="19" height="19" viewBox="0 0 19 19"><circle cx="9.5" cy="9.5" r="8.5" fill="#f4836c"/><path d="M6 6 L13 13 M13 6 L6 13" stroke="#7a3c30" stroke-width="1.2"/></svg>
<div style="left:905px;top:789px;width:768px;height:1px;background:#cfd0e0"></div>
<div class="t" style="left:1132px;top:769.48px;font-size:15.5px;line-height:15.5px;font-weight:400;color:#111;">21.04.2023</div>
<div style="left:903px;top:725px;width:766px;height:63px;border:3px solid #e1332c;border-radius:5px"></div>
<div class="t" style="left:905.7px;top:795.46px;font-size:16px;line-height:16px;font-weight:400;color:#000;letter-spacing:0.1px;">Проведено к/дней:</div>
<div class="t" style="left:1076px;top:795.46px;font-size:16px;line-height:16px;font-weight:400;color:#000;letter-spacing:0.1px;">18</div>
<div style="left:983px;top:156px;width:303px;height:157px;background:#3e444a;border:1px solid #1e2124;box-shadow:inset 0 0 0 1px #f2f2f2, 2px 2px 3px rgba(0,0,0,0.35)"></div>
<div class="t" style="left:1001px;top:166.26px;font-size:16px;line-height:16px;font-weight:400;color:#c9c9c9;letter-spacing:0.1px;">Создать историю болезни</div>
<div class="t" style="left:1001px;top:190.96px;font-size:16px;line-height:16px;font-weight:400;color:#fff;letter-spacing:0.1px;">Восстановление</div>
<div class="t" style="left:1001px;top:215.66px;font-size:16px;line-height:16px;font-weight:400;color:#c9c9c9;letter-spacing:0.1px;">Связать с внешней системой</div>
<div class="t" style="left:1001px;top:240.36px;font-size:16px;line-height:16px;font-weight:400;color:#fff;letter-spacing:0.1px;">Выезд</div>
<div class="t" style="left:1001px;top:265.06px;font-size:16px;line-height:16px;font-weight:400;color:#c9c9c9;letter-spacing:0.1px;">Временный выезд/госпитализация</div>
<div class="t" style="left:1001px;top:289.76px;font-size:16px;line-height:16px;font-weight:400;color:#c9c9c9;letter-spacing:0.1px;">Добавить путёвку</div>
<div style="left:999px;top:260px;width:266px;height:20px;border:3px solid #e1332c;border-radius:5px"></div>
<div style="left:931px;top:114px;width:42px;height:45px;background:rgba(255,255,255,0.8);border-radius:4px"></div>
<svg style="position:absolute;left:946px;top:125px;" width="10" height="23" viewBox="0 0 10 23"><path d="M1.8 9.2 L7.3 2.3 L7.3 21.2" stroke="#e2271f" stroke-width="1.9" fill="none" stroke-linejoin="miter"/></svg>
<div style="left:953px;top:246px;width:42px;height:45px;background:rgba(255,255,255,0.8);border-radius:4px"></div>
<svg style="position:absolute;left:966px;top:257px;" width="16" height="23" viewBox="0 0 16 23"><path d="M2.6 6.3 Q3.2 2.2 7.8 2.2 Q12.6 2.2 12.6 6.9 Q12.6 9.8 9.2 13.3 L2.6 19.9 L14.2 19.9" stroke="#e2271f" stroke-width="1.9" fill="none"/></svg>
<div style="left:1075px;top:738px;width:42px;height:52px;background:rgba(255,255,255,0.8);border-radius:4px"></div>
<svg style="position:absolute;left:1088px;top:749px;" width="16" height="23" viewBox="0 0 16 23"><path d="M2.6 5.8 Q3.4 2.2 7.6 2.2 Q12 2.2 12 6.2 Q12 10.2 7 10.2 L5.6 10.2 L7 10.2 Q12.9 10.2 12.9 15.2 Q12.9 20 7.6 20 Q3.2 20 2.2 16.6" stroke="#e2271f" stroke-width="1.9" fill="none"/></svg>
<div style="left:0px;top:807px;width:1699px;height:12px;background:#fff"></div>
</body></html>
